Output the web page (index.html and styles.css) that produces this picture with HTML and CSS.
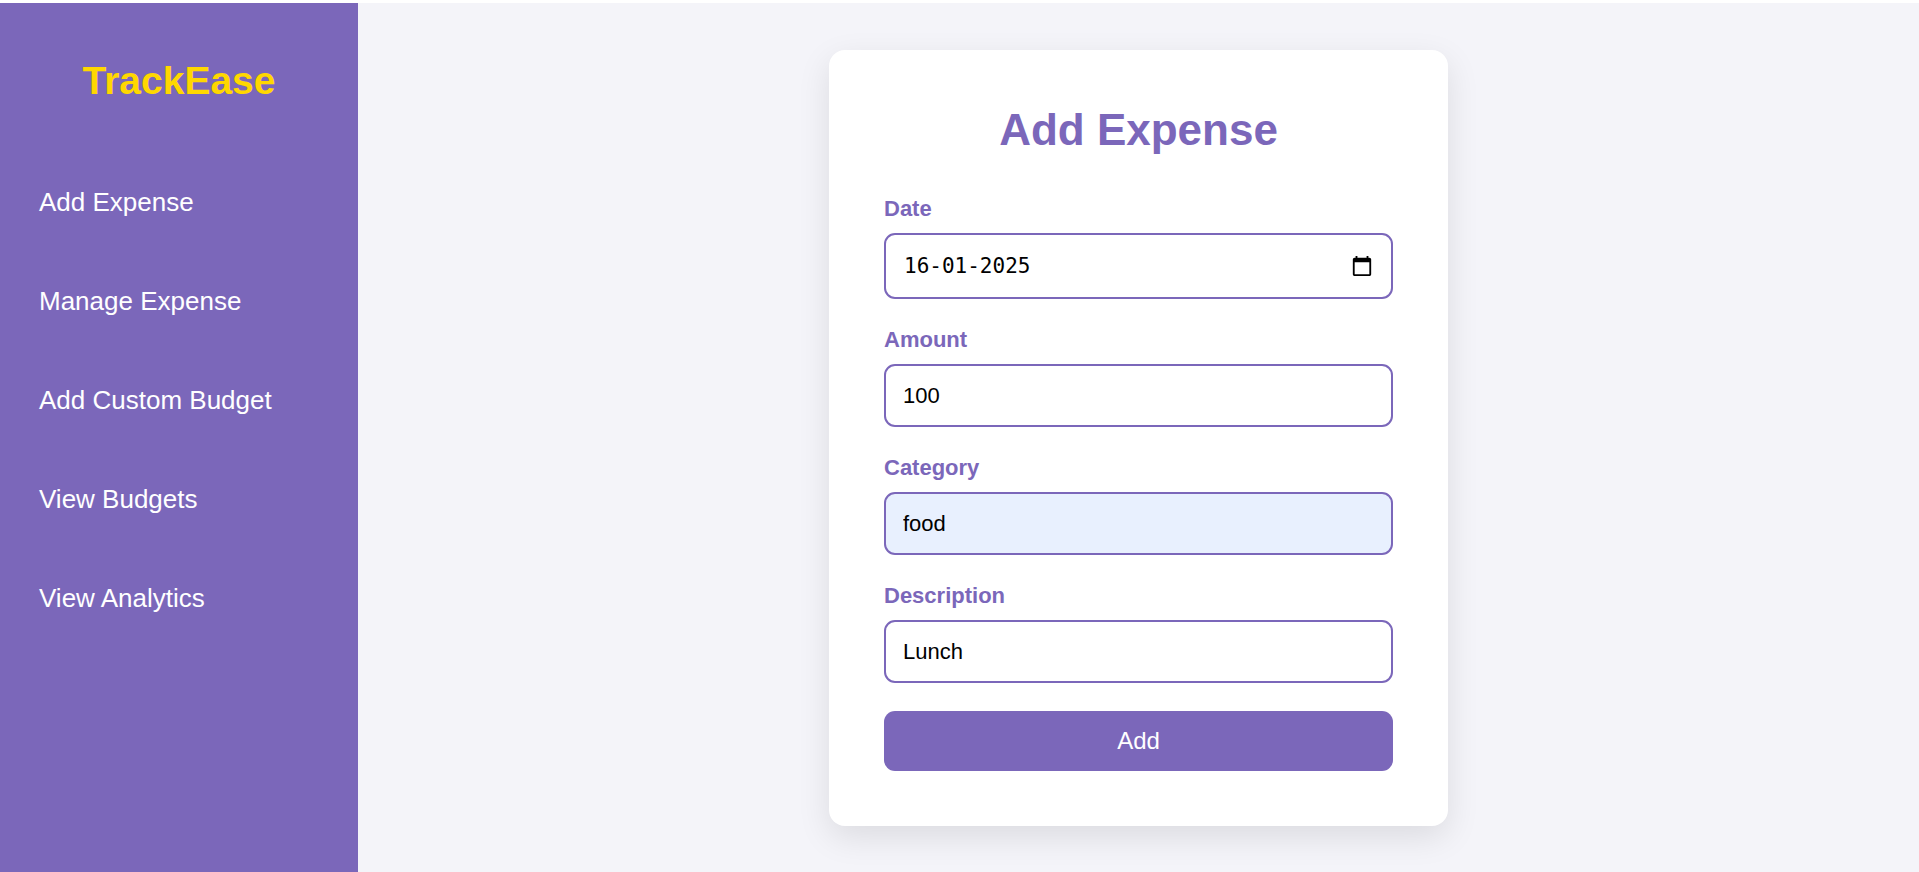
FILE: index.html
```html
<!DOCTYPE html>
<html lang="en">
<head>
  <meta charset="UTF-8">
  <meta name="viewport" content="width=device-width, initial-scale=1">
  <title>TrackEase - Add Expense</title>
  <link rel="stylesheet" href="styles.css">
</head>
<body>
  <div class="app">
    <aside class="sidebar">
      <h2 class="brand">TrackEase</h2>
      <nav class="menu">
        <a class="menu-link" href="#add-expense">Add Expense</a>
        <a class="menu-link" href="#manage-expense">Manage Expense</a>
        <a class="menu-link" href="#add-budget">Add Custom Budget</a>
        <a class="menu-link" href="#view-budgets">View Budgets</a>
        <a class="menu-link" href="#view-analytics">View Analytics</a>
      </nav>
    </aside>
    <main class="content">
      <form class="card">
        <h1 class="card-title">Add Expense</h1>
        <div class="field">
          <label class="label" for="date">Date</label>
          <div class="control date-control">
            <input class="date-input" id="date" type="text" value="16-01-2025">
            <button class="picker" type="button" aria-label="Open calendar">
              <svg class="picker-icon" viewBox="0 0 24 24" aria-hidden="true"><path d="M20 3h-1V1h-2v2H7V1H5v2H4c-1.1 0-2 .9-2 2v16c0 1.1.9 2 2 2h16c1.1 0 2-.9 2-2V5c0-1.1-.9-2-2-2zm0 18H4V8h16v13z"/></svg>
            </button>
          </div>
        </div>
        <div class="field">
          <label class="label" for="amount">Amount</label>
          <input class="control" id="amount" type="text" inputmode="decimal" value="100">
        </div>
        <div class="field">
          <label class="label" for="category">Category</label>
          <input class="control control-filled" id="category" type="text" value="food">
        </div>
        <div class="field">
          <label class="label" for="description">Description</label>
          <input class="control" id="description" type="text" value="Lunch">
        </div>
        <button class="submit" type="submit">Add</button>
      </form>
    </main>
  </div>
</body>
</html>
```
FILE: styles.css
```css
* {
  box-sizing: border-box;
  margin: 0;
}

body {
  border-top: 3px solid #fff;
  min-height: 100vh;
  display: flex;
  background: #f4f4f9;
  font-family: "Liberation Sans", Arial, sans-serif;
}

.app {
  flex: 1;
  display: flex;
}

.sidebar {
  flex: 0 0 358px;
  padding: 55px 23px;
  background: #7b67ba;
}

.brand {
  margin-bottom: 68px;
  color: #ffd700;
  font-size: 39px;
  line-height: 45px;
  text-align: center;
}

.menu {
  display: flex;
  flex-direction: column;
  gap: 37px;
}

.menu-link {
  padding: 16px;
  color: #fff;
  font-size: 26px;
  line-height: 30px;
  text-decoration: none;
}

.content {
  flex: 1;
  display: flex;
  align-items: flex-start;
  justify-content: center;
  padding: 47px 20px 46px;
}

.card {
  flex: 0 1 619px;
  display: flex;
  flex-direction: column;
  gap: 28px;
  padding: 55px;
  border-radius: 16px;
  background: #fff;
  box-shadow: 0 11px 33px rgba(0, 0, 0, 0.1);
}

.card-title {
  margin-bottom: 13px;
  color: #7b67ba;
  font-size: 44px;
  line-height: 50px;
  text-align: center;
}

.field {
  display: flex;
  flex-direction: column;
  gap: 12px;
}

.label {
  color: #7b67ba;
  font-size: 22px;
  font-weight: bold;
  line-height: 25px;
}

.control {
  width: 100%;
  padding: 17px;
  border: 2px solid #7b67ba;
  border-radius: 11px;
  background: #fff;
  color: #000;
  font-family: inherit;
  font-size: 22px;
  line-height: 25px;
}

.control-filled {
  background: #e8f0fe;
}

.date-control {
  display: flex;
  align-items: center;
  padding: 18px;
}

.date-input {
  flex: 1;
  min-width: 0;
  padding: 0;
  border: 0;
  background: none;
  color: #000;
  font-family: "DejaVu Sans Mono", monospace;
  font-size: 21px;
  line-height: 26px;
}

.picker {
  display: flex;
  padding: 0;
  border: 0;
  background: none;
}

.picker-icon {
  width: 22px;
  height: 22px;
}

.submit {
  padding: 16px;
  border: 0;
  border-radius: 11px;
  background: #7b67ba;
  color: #fff;
  font-family: inherit;
  font-size: 24px;
  line-height: 28px;
}
```
